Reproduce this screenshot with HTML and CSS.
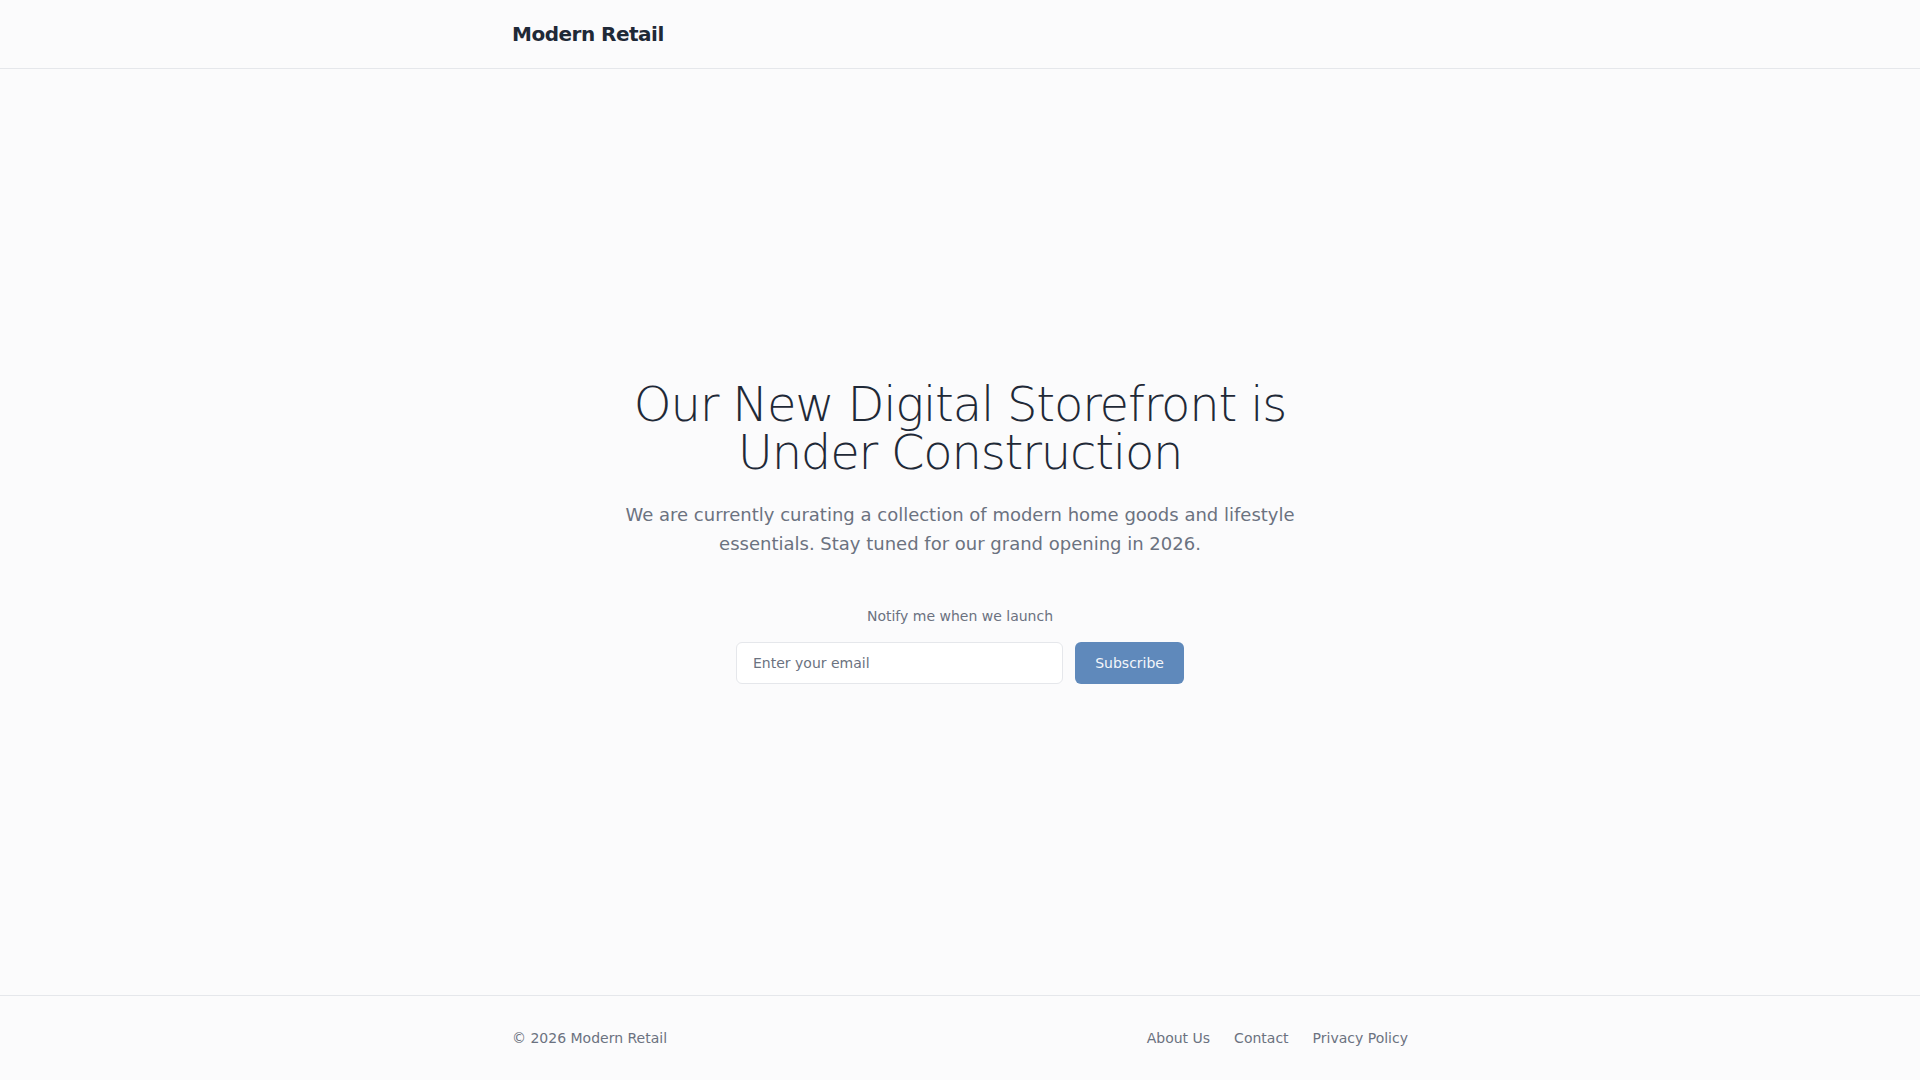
FILE: index.html
```html
<!DOCTYPE html>
<html lang="en">
<head>
<meta charset="utf-8">
<title>Modern Retail — Coming Soon</title>
<link rel="stylesheet" href="styles.css">
</head>
<body>
<div class="page">
  <header class="site-header">
    <div class="container">
      <span class="brand">Modern Retail</span>
    </div>
  </header>
  <main class="main">
    <section class="hero">
      <h1 class="hero-title">Our New Digital Storefront is Under Construction</h1>
      <p class="hero-text">We are currently curating a collection of modern home goods and lifestyle essentials. Stay tuned for our grand opening in 2026.</p>
      <div class="notify">
        <p class="notify-label">Notify me when we launch</p>
        <form class="notify-form" onsubmit="return false;">
          <input class="notify-input" type="email" placeholder="Enter your email">
          <button class="notify-btn" type="submit">Subscribe</button>
        </form>
      </div>
    </section>
  </main>
  <footer class="site-footer">
    <div class="container footer-row">
      <span class="copyright">© 2026 Modern Retail</span>
      <nav class="footer-links">
        <a href="#">About Us</a>
        <a href="#">Contact</a>
        <a href="#">Privacy Policy</a>
      </nav>
    </div>
  </footer>
</div>
</body>
</html>
```
FILE: styles.css
```css
* { box-sizing: border-box; }
html, body { margin: 0; padding: 0; }
body {
  font-family: "DejaVu Sans", sans-serif;
  background: #fbfbfc;
  color: #1f2937;
}
.page {
  min-height: 100vh;
  display: flex;
  flex-direction: column;
}
.container {
  width: 100%;
  max-width: 896px;
  margin: 0 auto;
}
.site-header {
  border-bottom: 1px solid #e5e7eb;
  padding: 20px 0;
}
.brand {
  display: block;
  font-size: 20px;
  line-height: 28px;
  font-weight: 700;
  letter-spacing: -0.025em;
  color: #1f2937;
}
.main {
  flex: 1;
  display: flex;
  align-items: center;
  justify-content: center;
}
.hero {
  display: flex;
  flex-direction: column;
  align-items: center;
  text-align: center;
}
.hero-title {
  margin: 0 0 24px;
  max-width: 768px;
  font-size: 48px;
  line-height: 48px;
  font-weight: 300;
  letter-spacing: -0.025em;
  color: #1f2937;
}
.hero-text {
  margin: 0;
  max-width: 672px;
  font-size: 18px;
  line-height: 1.625;
  color: #6b7280;
}
.notify {
  margin-top: 48px;
  width: 448px;
}
.notify-label {
  margin: 0 0 16px;
  font-size: 14px;
  line-height: 20px;
  color: #6b7280;
}
.notify-form {
  display: flex;
  gap: 12px;
  margin: 0;
}
.notify-input {
  flex: 1;
  min-width: 0;
  height: 42px;
  padding: 10px 16px;
  border: 1px solid #e5e7eb;
  border-radius: 6px;
  background: #ffffff;
  font-family: inherit;
  font-size: 14px;
  line-height: 20px;
  color: #1f2937;
  outline: none;
}
.notify-input::placeholder { color: #6b7280; }
.notify-btn {
  height: 42px;
  padding: 0 20px;
  border: none;
  border-radius: 6px;
  background: #5f89bb;
  color: #f3f6fa;
  font-family: inherit;
  font-size: 14px;
  line-height: 20px;
  cursor: pointer;
}
.site-footer {
  border-top: 1px solid #e5e7eb;
  padding: 32px 0;
}
.footer-row {
  display: flex;
  justify-content: space-between;
  align-items: center;
  font-size: 14px;
  line-height: 20px;
}
.copyright { color: #6b7280; }
.footer-links {
  display: flex;
  gap: 24px;
}
.footer-links a {
  color: #6b7280;
  text-decoration: none;
}
```
